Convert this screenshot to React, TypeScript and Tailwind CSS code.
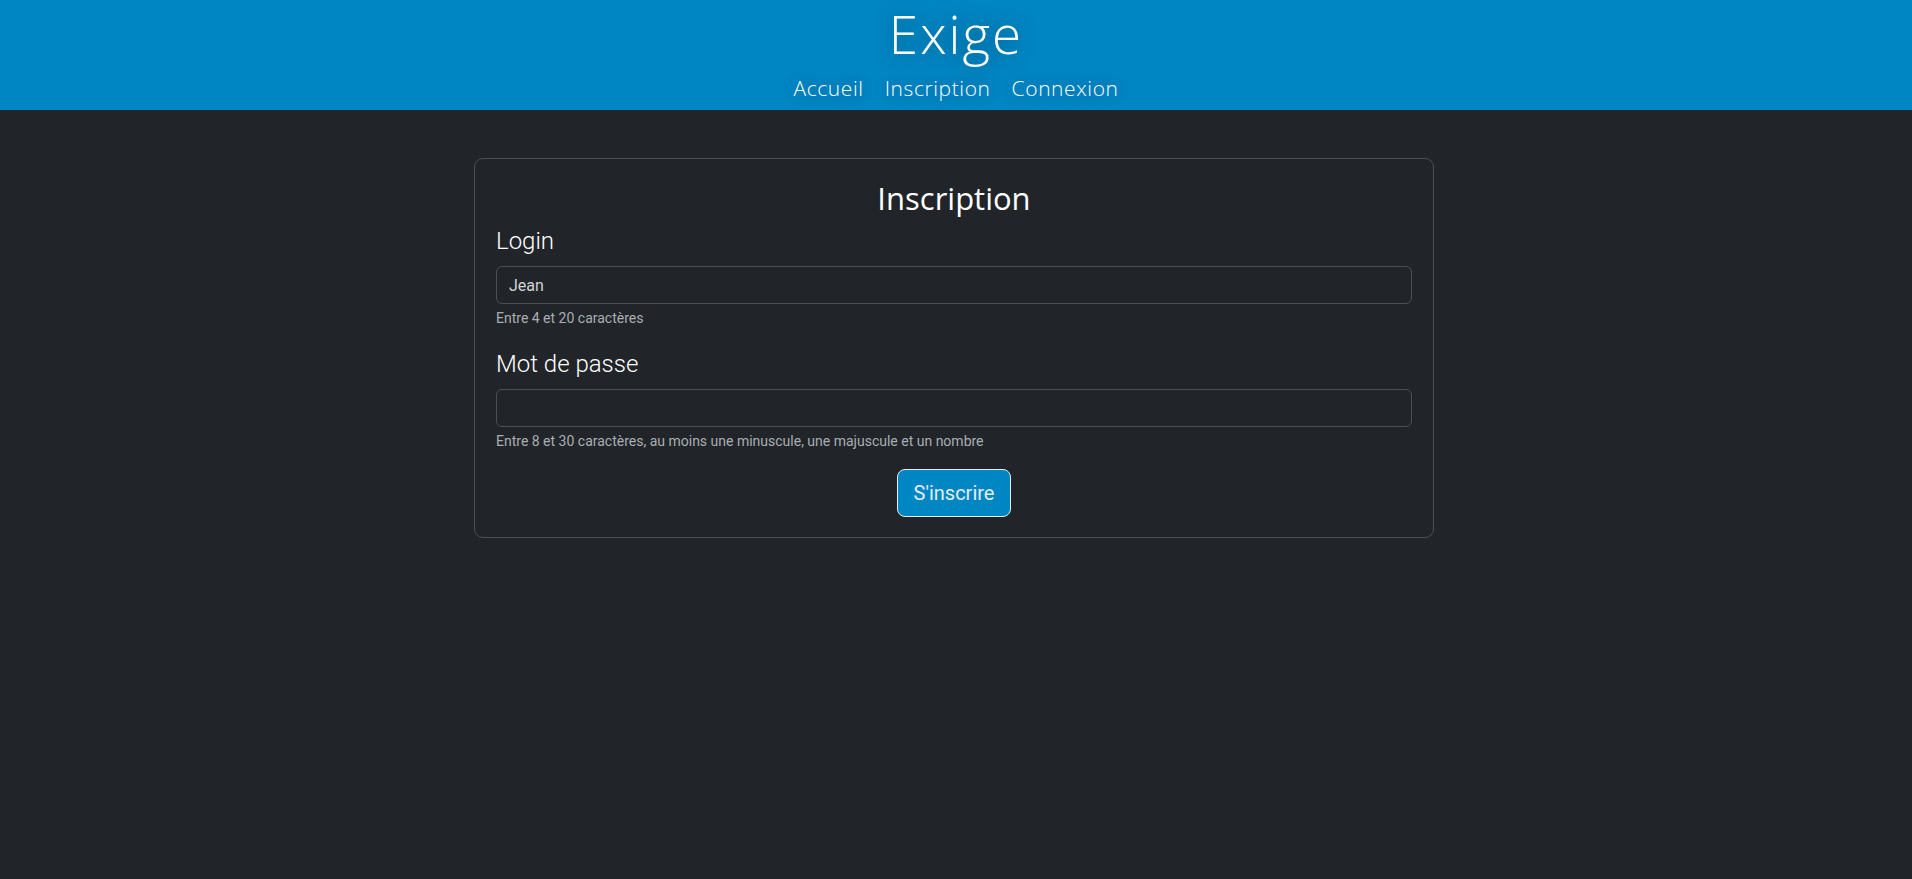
export default function App() {
  return (
    <div className="min-h-screen bg-[#212529] font-['Roboto',sans-serif] text-white">
      <header className="h-[110px] bg-[#0086c3] flex flex-col items-center">
        <h1 className="mt-[4px] text-[53px] leading-[60px] font-light tracking-[2px] font-['Open_Sans',sans-serif] [text-shadow:0_0_18px_rgba(0,40,70,0.55)]">
          Exige
        </h1>
        <nav className="mt-[11px] flex gap-[21px] text-[21px] leading-[26px] font-light tracking-[0.6px] font-['Open_Sans',sans-serif] [text-shadow:0_0_14px_rgba(0,40,70,0.45)]">
          <a href="#">Accueil</a>
          <a href="#">Inscription</a>
          <a href="#">Connexion</a>
        </nav>
      </header>

      <main className="flex justify-center pt-[48px] pr-[4px]">
        <form className="w-[960px] border border-[#4b5057] rounded-[9px] px-[21px] pt-[20px] pb-[20px]">
          <h2 className="text-center text-[31px] leading-[38px] font-medium font-['Open_Sans',sans-serif]">
            Inscription
          </h2>

          <label className="block mt-[9px] text-[24px] leading-[30px] font-light">Login</label>
          <input
            defaultValue="Jean"
            className="mt-[10px] block w-full h-[38px] rounded-[6px] border border-[#4b5057] bg-[#212529] px-[12px] text-[16px] text-[#cfd3d7] outline-none"
          />
          <p className="mt-[4px] text-[14px] leading-[20px] text-[#a9aeb3]">Entre 4 et 20 caractères</p>

          <label className="block mt-[21px] text-[24px] leading-[30px] font-light">Mot de passe</label>
          <input
            type="password"
            className="mt-[10px] block w-full h-[38px] rounded-[6px] border border-[#4b5057] bg-[#212529] px-[12px] text-[16px] text-[#cfd3d7] outline-none"
          />
          <p className="mt-[4px] text-[14px] leading-[20px] text-[#a9aeb3]">
            Entre 8 et 30 caractères, au moins une minuscule, une majuscule et un nombre
          </p>

          <div className="mt-[18px] flex justify-center">
            <button
              type="button"
              className="h-[48px] px-[16px] rounded-[8px] border border-[#e6eef3] bg-[#0086c3] text-[20px] text-[#e3eef5]"
            >
              S'inscrire
            </button>
          </div>
        </form>
      </main>
    </div>
  );
}
